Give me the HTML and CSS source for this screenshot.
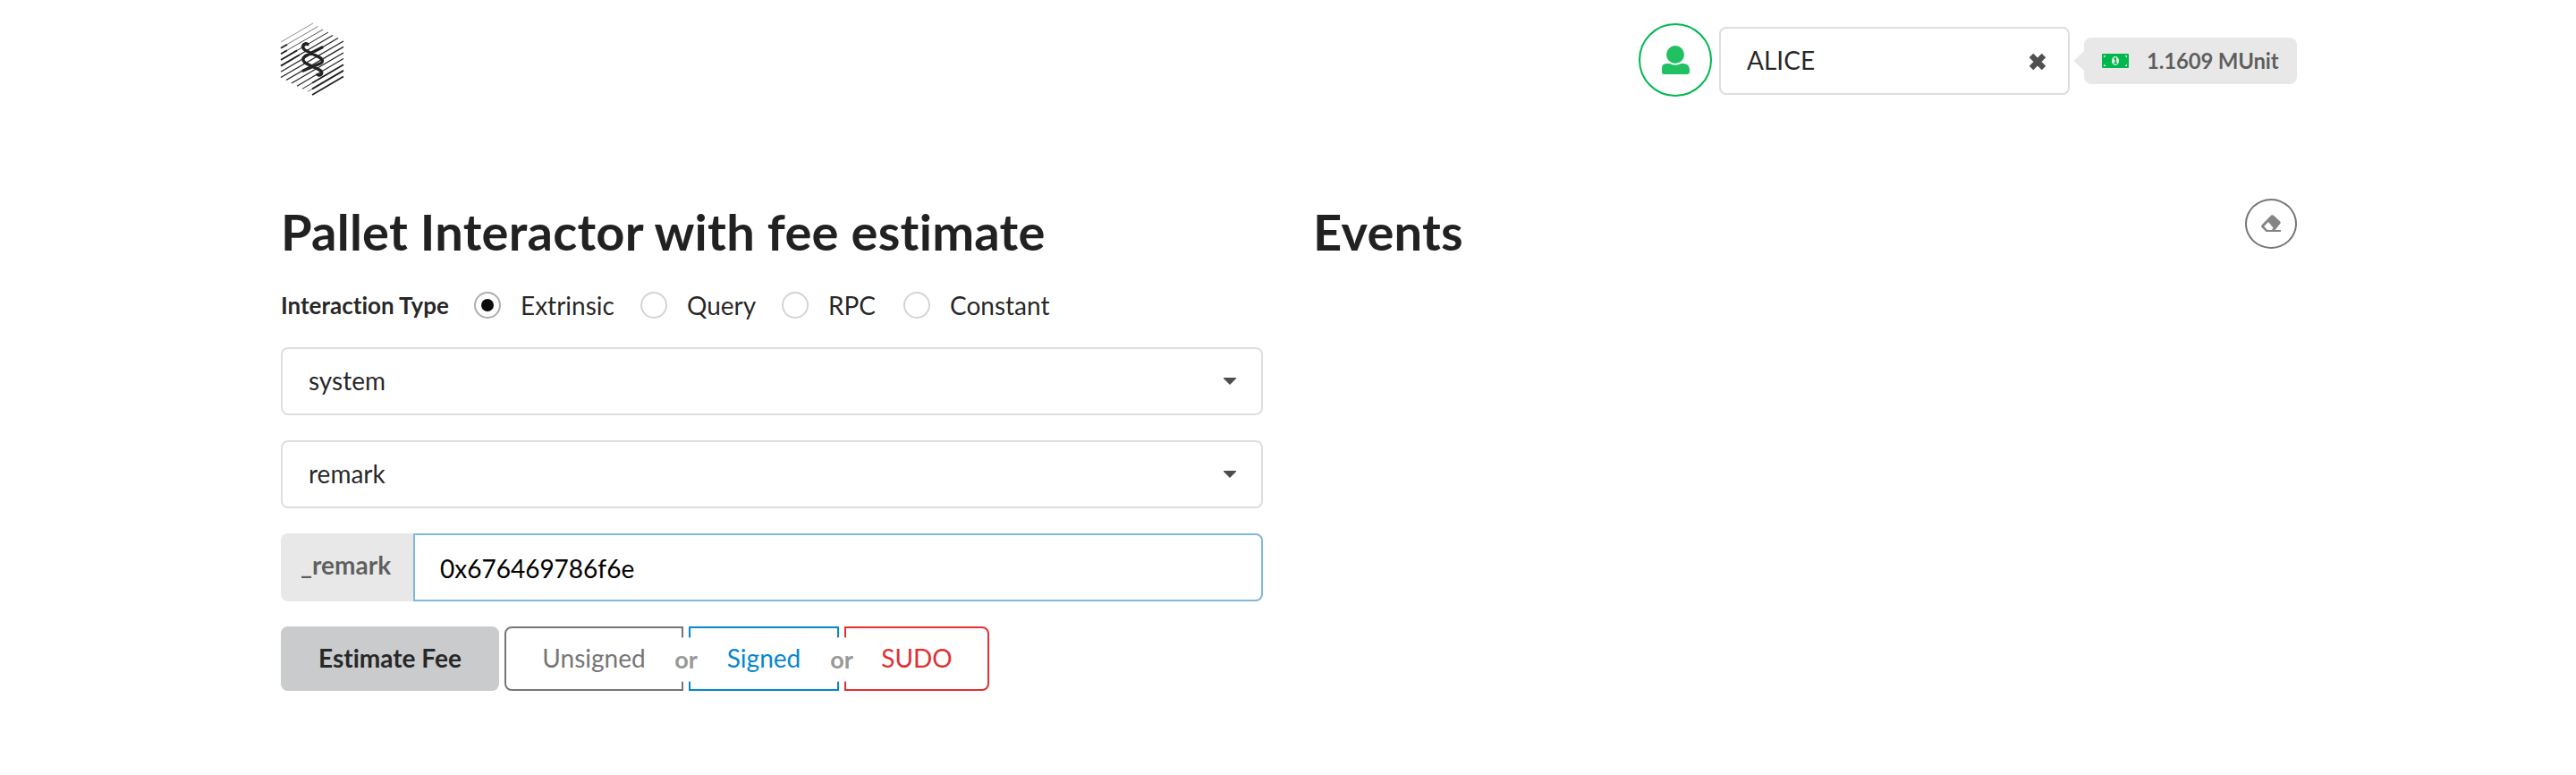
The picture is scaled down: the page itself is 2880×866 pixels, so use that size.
FILE: index.html
```html
<!DOCTYPE html>
<html lang="en">
<head>
<meta charset="utf-8">
<title>Pallet Interactor</title>
<link rel="stylesheet" href="styles.css">
</head>
<body>
<div class="container">
  <header class="menu">
    <svg class="logo" viewBox="0 0 72 82">
      <g class="hatch">
        <path stroke-width=".5" d="M1 22L37 1"/>
        <path stroke-width=".6" d="M1 28.700L42.500 4.500"/>
        <path stroke-width=".8" d="M1 35.300L48 8"/>
        <path stroke-width="1" d="M1 42L54 11"/>
        <path stroke-width="1.200" d="M1 48.600L59 14.500"/>
        <path stroke-width="1.300" d="M1 55.200L65 17.500"/>
        <path stroke-width="1.400" d="M1 61.500L71 21"/>
        <path stroke-width="1.400" d="M7 64.500L71 27.300"/>
        <path stroke-width="1.300" d="M13 68L71 34"/>
        <path stroke-width="1.200" d="M19 71.200L71 40.600"/>
        <path stroke-width="1" d="M25 74.300L71 47.300"/>
        <path stroke-width=".6" d="M31 77.400L71 53.900"/>
        <path stroke-width="1.800" d="M36 81L71 60.500M36 74.400L71 53.900M36 67.800L71 47.300M1 28.700L8 24.700M1 35.300L8 31.200M1 42L19 31.400M1 48.600L22 36.300"/>
      </g>
      <path class="helix" d="M31 24.500C27 22 23 27 28 31L44 39C49 42 48 44.500 45 46L26 54M47 28L28.500 37.500C25 40 25 43 28.500 45.500L44 53C48.500 55.500 47 60.500 42 58.500"/>
    </svg>
    <div class="account">
      <span class="avatar">
        <svg viewBox="0 0 32 33"><circle cx="16" cy="10" r="10"/><path d="M1 25q0-5 6-5h2.500q6.500 3.500 13 0H25q6 0 7 6v3q0 3-3 3H3q-2 0-2-2z"/></svg>
      </span>
      <div class="select account-select">
        <span>ALICE</span>
        <svg class="clear" viewBox="0 0 20 20"><path d="M3 3L17 17M17 3L3 17"/></svg>
      </div>
      <div class="balance">
        <svg viewBox="0 0 30 16"><rect class="bill" width="30" height="16" rx="1"/><path class="mark" d="M2 2h2.500L2 4.500zM28 2v2.500L25.500 2zM2 14v-2.500L4.500 14zM28 14h-2.500L28 11.500z"/><ellipse class="mark" cx="15" cy="8" rx="4" ry="5"/><path class="one" d="M13.500 6l1.800-1v5.500M13.300 10.700h3.800"/></svg>
        <span>1.1609 MUnit</span>
      </div>
    </div>
  </header>
  <main class="grid">
    <section class="column">
      <h1>Pallet Interactor with fee estimate</h1>
      <div class="types">
        <label class="types-title">Interaction Type</label>
        <label class="radio extrinsic checked"><i></i>Extrinsic</label>
        <label class="radio query"><i></i>Query</label>
        <label class="radio rpc"><i></i>RPC</label>
        <label class="radio"><i></i>Constant</label>
      </div>
      <div class="fields">
        <div class="select"><span>system</span><svg class="caret" viewBox="0 0 14 8"><path d="M0 0h14v1L7 8 0 1z"/></svg></div>
        <div class="select"><span>remark</span><svg class="caret" viewBox="0 0 14 8"><path d="M0 0h14v1L7 8 0 1z"/></svg></div>
        <div class="input"><div class="input-label">_remark</div><div class="input-value">0x676469786f6e</div></div>
        <div class="actions">
          <div class="button estimate">Estimate Fee</div>
          <div class="button unsigned">Unsigned</div>
          <div class="or"><b>or</b></div>
          <div class="button signed">Signed</div>
          <div class="or"><b>or</b></div>
          <div class="button sudo">SUDO</div>
        </div>
      </div>
    </section>
    <section class="column events">
      <h1>Events</h1>
      <span class="erase">
        <svg viewBox="0 0 22 20"><path fill-rule="evenodd" d="M11 .8q1.600-1.300 3 0l7 6.500q1.400 1.500 0 3L15.500 17H22v2H5.500L.8 14.300q-1.500-1.500 0-3zM8 8L3.200 13l3.800 4h5l1.500-2.500z"/></svg>
      </span>
    </section>
  </main>
</div>
</body>
</html>
```
FILE: styles.css
```css
* { box-sizing: border-box; }
body {
  margin: 0;
  background: #fff;
  color: rgba(0, 0, 0, .87);
  font: 28px/40px Lato, "Liberation Sans", sans-serif;
  font-variant-ligatures: none;
}
svg { display: block; flex: none; }
.container { width: 2256px; margin: 0 auto; padding-left: 2px; }
.menu {
  display: flex;
  justify-content: space-between;
  align-items: flex-start;
  height: 222px;
  padding-top: 25px;
}
.logo { width: 72px; height: 82px; margin-left: -1px; }
.hatch { stroke: #222; fill: none; }
.helix { stroke: #222; stroke-width: 3.4; fill: none; stroke-linecap: round; }
.account { display: flex; align-items: center; padding-top: 1px; }
.avatar {
  display: flex;
  align-items: center;
  justify-content: center;
  width: 82px;
  height: 82px;
  margin-right: 8px;
  border: 2px solid #00b74d;
  border-radius: 50%;
}
.avatar svg { width: 32px; height: 33px; fill: #21c063; }
.select {
  display: flex;
  align-items: center;
  justify-content: space-between;
  height: 76px;
  padding: 0 28px 0 29px;
  border: 2px solid #dedede;
  border-radius: 8px;
}
.select span { margin-top: -2px; }
.account-select { width: 392px; padding-right: 24px; margin-top: 2px; }
.clear { width: 20px; height: 20px; stroke: #505050; stroke-width: 6.4; margin-top: 1px; }
.caret { width: 14px; height: 8px; fill: #4d4d4d; }
.balance {
  position: relative;
  display: flex;
  align-items: center;
  width: 238px;
  height: 52px;
  margin: 2px 0 0 16px;
  padding-left: 20px;
  background: #e8e8e8;
  border-radius: 8px;
  color: rgba(0, 0, 0, .6);
  font-size: 24px;
  font-weight: 700;
  letter-spacing: -.2px;
}
.balance span { margin-top: -1px; }
.balance::before {
  content: "";
  position: absolute;
  left: -8px;
  top: 18px;
  width: 16px;
  height: 16px;
  background: #e8e8e8;
  transform: rotate(45deg);
}
.balance svg { width: 30px; height: 16px; margin-right: 20px; }
.bill { fill: #00b74d; }
.mark { fill: #e8e8e8; }
.one { stroke: #00b74d; stroke-width: 1.6; fill: none; }
.grid { display: flex; gap: 56px; }
.column { width: 1098px; }
h1 { margin: 0; font-size: 56px; line-height: 74px; height: 72px; font-weight: 700; letter-spacing: .25px; }
.types { display: flex; align-items: center; height: 40px; margin-top: 27px; }
.types-title { width: 216px; font-size: 26px; font-weight: 700; }
.radio { display: flex; align-items: center; height: 40px; }
.radio i {
  display: flex;
  align-items: center;
  justify-content: center;
  width: 30px;
  height: 30px;
  margin-right: 22px;
  border: 2px solid #d4d4d5;
  border-radius: 50%;
}
.checked i { border-color: #adadad; }
.checked i::after { content: ""; width: 14px; height: 14px; border-radius: 50%; background: #0d0d0d; }
.extrinsic { width: 186px; }
.query { width: 158px; }
.rpc { width: 136px; }
.fields { display: flex; flex-direction: column; gap: 28px; margin-top: 27px; }
.input { display: flex; height: 76px; }
.input-label {
  width: 148px;
  padding: 15px 0 0 22px;
  background: #e8e8e8;
  border-radius: 8px 0 0 8px;
  color: rgba(0, 0, 0, .6);
  font-weight: 700;
}
.input-value {
  flex: 1;
  padding: 17px 28px;
  border: 2px solid #7fb8da;
  border-radius: 0 8px 8px 0;
  color: #000;
}
.actions { display: flex; height: 72px; }
.button {
  display: flex;
  align-items: center;
  justify-content: center;
  padding-bottom: 2px;
  border: 2px solid;
}
.estimate {
  width: 244px;
  margin-right: 6px;
  border-color: #cacbcd;
  border-radius: 8px;
  background: #cacbcd;
  color: #272828;
  font-weight: 700;
}
.unsigned { width: 200px; border-radius: 8px 0 0 8px; color: #767676; }
.signed { width: 168px; color: #0487cf; }
.sudo { width: 162px; border-radius: 0 8px 8px 0; color: #e03034; }
.or { display: flex; align-items: center; justify-content: center; width: 6px; }
.or b {
  flex: none;
  z-index: 1;
  width: 50px;
  height: 50px;
  margin-top: 1px;
  border-radius: 50%;
  background: #fff;
  color: #999;
  font-size: 27px;
  line-height: 50px;
  text-align: center;
}
.events { display: flex; justify-content: space-between; align-items: flex-start; width: 1100px; }
.erase {
  display: flex;
  align-items: center;
  justify-content: center;
  width: 58px;
  height: 56px;
  border: 2px solid #767676;
  border-radius: 50%;
}
.erase svg { width: 22px; height: 20px; fill: #858585; }
```
